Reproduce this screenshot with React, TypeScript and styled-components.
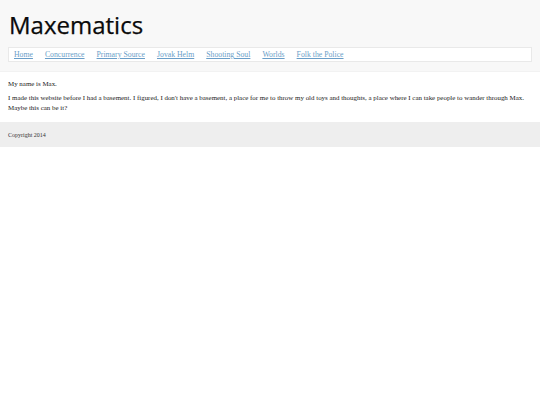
import React from "react";
import styled, { createGlobalStyle } from "styled-components";

const Global = createGlobalStyle`
  html, body { margin: 0; padding: 0; background: #ffffff; }
  body { font-family: "Liberation Serif", "Times New Roman", serif; color: #222; }
`;

const Header = styled.header`
  background: #f8f8f8;
  padding: 7px 8px 9px 8px;
  border-bottom: 1px solid #f2f2f2;
`;

const Title = styled.h1`
  margin: 0 0 4px 1px;
  font-family: "Open Sans", "Noto Sans", sans-serif;
  font-weight: 500;
  font-size: 24px;
  line-height: 36px;
  color: #0a0a0a;
  -webkit-text-stroke: 0.25px #0a0a0a;
`;

const Nav = styled.nav`
  display: flex;
  gap: 12px;
  align-items: center;
  height: 13px;
  padding: 0 5px;
  background: #ffffff;
  border: 1px solid #e9e9e9;
`;

const NavLink = styled.a`
  font-size: 7.75px;
  line-height: 13px;
  color: #6a9ec8;
  text-decoration: underline;
`;

const Main = styled.main`
  display: flex;
  flex-direction: column;
  gap: 4px;
  padding: 7px 8px 9px 8px;
`;

const Para = styled.p`
  margin: 0;
  font-size: 6.93px;
  line-height: 10px;
  color: #1a1a1a;
`;

const Footer = styled.footer`
  background: #eeeeee;
  height: 25px;
  padding: 0 8px;
  display: flex;
  align-items: center;
  font-size: 6px;
  color: #333;
`;

const links = [
  "Home",
  "Concurrence",
  "Primary Source",
  "Jovak Helm",
  "Shooting Soul",
  "Worlds",
  "Folk the Police",
];

export default function App() {
  return (
    <>
      <Global />
      <Header>
        <Title>Maxematics</Title>
        <Nav>
          {links.map((l) => (
            <NavLink key={l} href="#">
              {l}
            </NavLink>
          ))}
        </Nav>
      </Header>
      <Main>
        <Para>My name is Max.</Para>
        <Para>
          I made this website before I had a basement. I figured, I don't have a
          basement, a place for me to throw my old toys and thoughts, a place
          where I can take people to wander through Max. Maybe this can be it?
        </Para>
      </Main>
      <Footer>Copyright 2014</Footer>
    </>
  );
}
